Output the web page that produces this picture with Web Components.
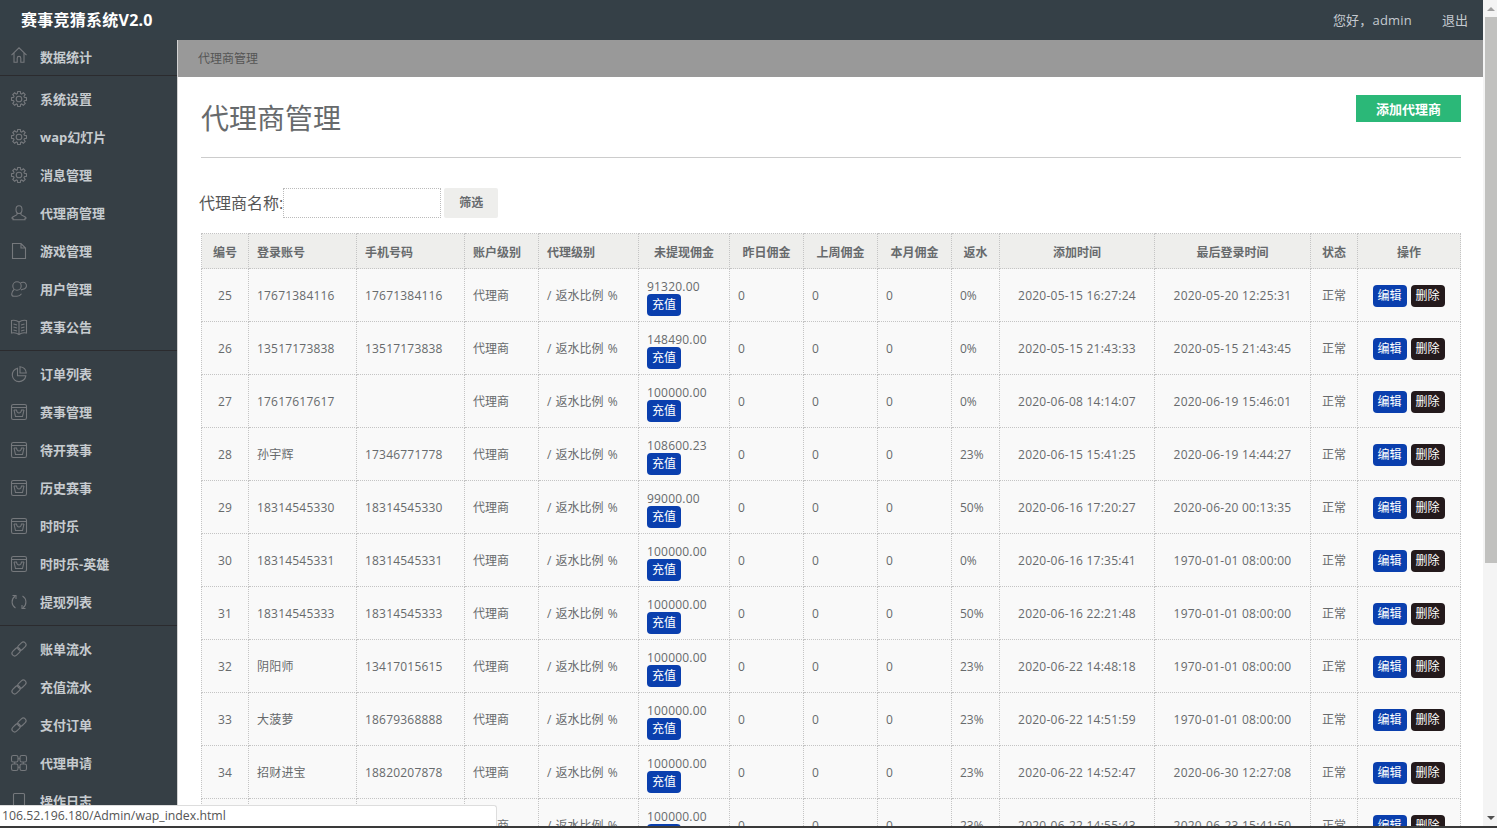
<!DOCTYPE html>
<html lang="zh">
<head>
<meta charset="utf-8">
<title>代理商管理</title>
<style>
  html, body { margin: 0; height: 828px; overflow: hidden; background: #fff; }
  body { font-family: "Open Sans", "Noto Sans CJK SC", sans-serif; font-size: 12px; color: #676a6c; }
</style>
</head>
<body>
<admin-shell>
  <top-bar slot="top" brand="赛事竞猜系统V2.0" user="您好，admin"></top-bar>
  <side-nav slot="side">
    <nav-group first>
      <nav-item icon="home">数据统计</nav-item>
    </nav-group>
    <nav-group>
      <nav-item icon="gear">系统设置</nav-item>
      <nav-item icon="gear">wap幻灯片</nav-item>
      <nav-item icon="gear">消息管理</nav-item>
      <nav-item icon="user">代理商管理</nav-item>
      <nav-item icon="file">游戏管理</nav-item>
      <nav-item icon="users">用户管理</nav-item>
      <nav-item icon="book">赛事公告</nav-item>
    </nav-group>
    <nav-group>
      <nav-item icon="pie">订单列表</nav-item>
      <nav-item icon="tray">赛事管理</nav-item>
      <nav-item icon="tray">待开赛事</nav-item>
      <nav-item icon="tray">历史赛事</nav-item>
      <nav-item icon="tray">时时乐</nav-item>
      <nav-item icon="tray">时时乐-英雄</nav-item>
      <nav-item icon="refresh">提现列表</nav-item>
    </nav-group>
    <nav-group last>
      <nav-item icon="link">账单流水</nav-item>
      <nav-item icon="link">充值流水</nav-item>
      <nav-item icon="link">支付订单</nav-item>
      <nav-item icon="grid">代理申请</nav-item>
      <nav-item icon="square">操作日志</nav-item>
    </nav-group>
  </side-nav>
  <page-crumb>代理商管理</page-crumb>
  <page-head action="添加代理商">代理商管理</page-head>
  <filter-bar label="代理商名称:" action="筛选"></filter-bar>
  <agent-table></agent-table>
</admin-shell>
<status-tip>106.52.196.180/Admin/wap_index.html</status-tip>

<script>
function gearPath() {
  var pts = [];
  for (var i = 0; i < 8; i++) {
    var a = i * Math.PI / 4 - Math.PI / 2;
    [[-0.3, 5.6], [-0.17, 7.6], [0.17, 7.6], [0.3, 5.6]].forEach(function (p) {
      pts.push((8 + p[1] * Math.cos(a + p[0])).toFixed(2) + " " + (8 + p[1] * Math.sin(a + p[0])).toFixed(2));
    });
  }
  return "M" + pts.join("L") + "Z";
}

const ICONS = {
  home: '<path transform="translate(0 -2)" d="M.5 8.2 8 .8l7.5 7.4M3 6v9.2h3.2v-4a1.8 1.8 0 0 1 3.6 0v4H13V6"/>',
  gear: '<path d="' + gearPath() + '"/><circle cx="8" cy="8" r="2.8"/>',
  user: '<path d="M5 4.5C5 2 6.3.7 8 .7s3 1.3 3 3.8c0 2.2-1.3 4-3 4S5 6.7 5 4.5zM6 8v1.5c0 1-4.5 1.5-5 3.2v.5h1v1.6h12v-1.6h1v-.5c-.5-1.7-5-2.2-5-3.2V8"/>',
  file: '<path d="M1.5.5H10L14.5 5v10.500h-13zM10 .5V5h4.500"/>',
  users: '<circle cx="6" cy="5" r="4.200"/><path d="M9.500 2.200A3.500 3.500 0 1 1 12 8.200c-.8 0-1.500.4-2 1M3 8.500C1.500 10 .7 11.500.7 13c0 1.400.9 2.300 2.200 2.300H6c2 0 3.500-1 4.500-2.500"/>',
  book: '<path d="M.5 1.500c2.700-.5 5.500 0 7.500 1.500 2-1.500 4.800-2 7.500-1.500V14c-2.700-.5-5.500 0-7.500 1.500C6 14 3.200 13.500.5 14zM8 3v12.500M2.500 5 6 6M2.500 8 6 9M2.500 11 6 12M13.500 5 10 6M13.500 8 10 9M13.500 11 10 12"/>',
  pie: '<path d="M6.500 2.200A6.800 6.800 0 1 0 14.800 9.800H6.500zM9 .7c3.400.3 6 2.900 6.300 6.300H9z"/>',
  tray: '<rect x=".5" y=".5" width="15" height="15" rx="1.800"/><path d="M.5 3.500h15M3 6h2.500c.5 4 4.500 4 5 0H13M3 6l1.500 6.500h7L13 6"/>',
  refresh: '<path d="M4.500 14A7 7 0 0 1 4 2.300M11.500 2A7 7 0 0 1 12 13.700M1.500 1.500H5V5M14.500 14.500H11V11"/>',
  link: '<g transform="rotate(-45 8 8)"><rect x="-.8" y="5.300" width="9.500" height="5.400" rx="2.700"/><rect x="7.300" y="5.300" width="9.500" height="5.400" rx="2.700"/></g>',
  grid: '<rect x=".5" y=".5" width="6.500" height="6.500" rx="1.800"/><rect x="9" y=".5" width="6.500" height="6.500" rx="1.800"/><rect x=".5" y="9" width="6.500" height="6.500" rx="1.800"/><rect x="9" y="9" width="6.500" height="6.500" rx="1.800"/><path d="M7 3.700h2M7 12.300h2M3.700 7v2M12.300 7v2"/>',
  square: '<rect x="2.500" y=".5" width="11" height="15" rx="1"/>'
};

class AdminShell extends HTMLElement {
  constructor() {
    super();
    this.shadowDOM = this.attachShadow({mode: "open"});
  }
  connectedCallback() {
    this.shadowDOM.innerHTML = `
      <style>
        :host { display: flex; flex-direction: column; height: 828px; overflow: hidden; }
        .screen { flex: 1; min-height: 0; display: flex; }
        .page { flex: 1; min-width: 0; display: flex; flex-direction: column; }
        .below { flex: 1; min-height: 0; display: flex; }
        .main { flex: 1; min-width: 0; border-left: 1px solid #d2d2d2; overflow: hidden; }
        .scroll { width: 14px; flex: none; display: flex; flex-direction: column; align-items: flex-end; background: #f4f4f4; }
        .arrow { width: 12px; height: 17px; display: flex; align-items: center; justify-content: center; }
        .up { width: 0; height: 0; border: 4px solid transparent; border-top: 0; border-bottom: 4px solid #a0a0a0; }
        .down { width: 0; height: 0; border: 4px solid transparent; border-bottom: 0; border-top: 4px solid #505050; }
        .thumb { width: 12px; height: 546px; background: #c1c1bf; }
        .gap { flex: 1; }
        .edge { height: 2px; background: #3a3a3a; flex: none; }
      </style>
      <div class="screen">
        <div class="page">
          <slot name="top"></slot>
          <div class="below">
            <slot name="side"></slot>
            <div class="main"><slot></slot></div>
          </div>
        </div>
        <div class="scroll">
          <div class="arrow"><span class="up"></span></div>
          <div class="thumb"></div>
          <div class="gap"></div>
          <div class="arrow"><span class="down"></span></div>
        </div>
      </div>
      <div class="edge"></div>`;
  }
}
customElements.define("admin-shell", AdminShell);

class TopBar extends HTMLElement {
  constructor() {
    super();
    this.shadowDOM = this.attachShadow({mode: "open"});
  }
  connectedCallback() {
    this.shadowDOM.innerHTML = `
      <style>
        :host { display: flex; align-items: center; justify-content: space-between; height: 40px; flex: none;
                background: #354047; padding: 0 15px 0 21px; }
        .brand { font-size: 16px; font-weight: 700; color: #fff; line-height: 40px; letter-spacing: .25px; }
        .links { display: flex; gap: 30px; font-size: 13px; color: #c4cad0; line-height: 40px; }
        .who { letter-spacing: .2px; }
      </style>
      <div class="brand">${this.getAttribute("brand")}</div>
      <div class="links"><span class="who">${this.getAttribute("user")}</span><span>退出</span></div>`;
  }
}
customElements.define("top-bar", TopBar);

class SideNav extends HTMLElement {
  constructor() {
    super();
    this.shadowDOM = this.attachShadow({mode: "open"});
  }
  connectedCallback() {
    this.shadowDOM.innerHTML = `
      <style>
        :host { display: block; width: 177px; flex: none; background: #363f45; overflow: hidden; }
      </style>
      <slot></slot>`;
  }
}
customElements.define("side-nav", SideNav);

class NavGroup extends HTMLElement {
  constructor() {
    super();
    this.shadowDOM = this.attachShadow({mode: "open"});
  }
  connectedCallback() {
    this.shadowDOM.innerHTML = `
      <style>
        :host { display: block; padding: 4px 0; border-bottom: 1px solid #2b2b2e; }
        :host([first]) { padding: 0; }
        :host([first]) ::slotted(nav-item) { height: 35px; }
        :host([last]) { border-bottom: 0; }
      </style>
      <slot></slot>`;
  }
}
customElements.define("nav-group", NavGroup);

class NavItem extends HTMLElement {
  constructor() {
    super();
    this.shadowDOM = this.attachShadow({mode: "open"});
  }
  connectedCallback() {
    this.shadowDOM.innerHTML = `
      <style>
        :host { display: flex; align-items: center; gap: 13px; height: 38px; box-sizing: border-box;
                padding: 0 0 2px 11px; font-size: 13px; font-weight: 700; color: #c6cbcf; white-space: nowrap; }
        svg { width: 16px; height: 16px; flex: none; margin-top: 1px; fill: none; stroke: #75787c; stroke-width: 1.1; overflow: visible; }
      </style>
      <svg viewBox="0 0 16 16">${ICONS[this.getAttribute("icon")]}</svg>
      <span><slot></slot></span>`;
  }
}
customElements.define("nav-item", NavItem);

class PageCrumb extends HTMLElement {
  constructor() {
    super();
    this.shadowDOM = this.attachShadow({mode: "open"});
  }
  connectedCallback() {
    this.shadowDOM.innerHTML = `
      <style>
        :host { display: block; height: 37px; line-height: 37px; background: #999; color: #555; font-size: 12px; padding-left: 20px; }
      </style>
      <slot></slot>`;
  }
}
customElements.define("page-crumb", PageCrumb);

class PageHead extends HTMLElement {
  constructor() {
    super();
    this.shadowDOM = this.attachShadow({mode: "open"});
  }
  connectedCallback() {
    this.shadowDOM.innerHTML = `
      <style>
        :host { display: flex; justify-content: space-between; align-items: flex-start; height: 81px; box-sizing: border-box;
                margin: 0 22px 0 23px; border-bottom: 1px solid #ccc; }
        h1 { margin: 0; padding-top: 21px; font-size: 28px; line-height: 40px; font-weight: 400; color: #676a6c; }
        a { display: block; margin-top: 18px; width: 105px; height: 27px; line-height: 28px; text-align: center;
            background: #2bb878; color: #fff; font-size: 13px; font-weight: 700; }
      </style>
      <h1><slot></slot></h1>
      <a>${this.getAttribute("action")}</a>`;
  }
}
customElements.define("page-head", PageHead);

class FilterBar extends HTMLElement {
  constructor() {
    super();
    this.shadowDOM = this.attachShadow({mode: "open"});
  }
  connectedCallback() {
    this.shadowDOM.innerHTML = `
      <style>
        :host { display: flex; align-items: center; height: 30px; margin: 30px 0 15px 21px; }
        label { font-size: 16px; color: #555; line-height: 30px; }
        input { box-sizing: border-box; width: 158px; height: 30px; margin: 0 3px 0 0; padding: 0 4px; background: #fff;
                border: 1px dotted #bbb; outline: 0; }
        button { width: 54px; height: 30px; padding: 0 0 2px; border: 0; border-radius: 2px; background: #eeeeec;
                 font: 700 12px "Open Sans", "Noto Sans CJK SC", sans-serif; color: #676a6c; }
      </style>
      <label>${this.getAttribute("label")}</label>
      <input type="text">
      <button>${this.getAttribute("action")}</button>`;
  }
}
customElements.define("filter-bar", FilterBar);

const AGENT_ROWS = [
  [25, "17671384116", "17671384116", "91320.00", "0%", "2020-05-15 16:27:24", "2020-05-20 12:25:31"],
  [26, "13517173838", "13517173838", "148490.00", "0%", "2020-05-15 21:43:33", "2020-05-15 21:43:45"],
  [27, "17617617617", "", "100000.00", "0%", "2020-06-08 14:14:07", "2020-06-19 15:46:01"],
  [28, "孙宇辉", "17346771778", "108600.23", "23%", "2020-06-15 15:41:25", "2020-06-19 14:44:27"],
  [29, "18314545330", "18314545330", "99000.00", "50%", "2020-06-16 17:20:27", "2020-06-20 00:13:35"],
  [30, "18314545331", "18314545331", "100000.00", "0%", "2020-06-16 17:35:41", "1970-01-01 08:00:00"],
  [31, "18314545333", "18314545333", "100000.00", "50%", "2020-06-16 22:21:48", "1970-01-01 08:00:00"],
  [32, "阴阳师", "13417015615", "100000.00", "23%", "2020-06-22 14:48:18", "1970-01-01 08:00:00"],
  [33, "大菠萝", "18679368888", "100000.00", "23%", "2020-06-22 14:51:59", "1970-01-01 08:00:00"],
  [34, "招财进宝", "18820207878", "100000.00", "23%", "2020-06-22 14:52:47", "2020-06-30 12:27:08"],
  [35, "财神", "18820207879", "100000.00", "23%", "2020-06-22 14:55:43", "2020-06-23 15:41:50"]
];

class AgentTable extends HTMLElement {
  constructor() {
    super();
    this.shadowDOM = this.attachShadow({mode: "open"});
  }
  connectedCallback() {
    this.render();
  }
  render() {
    const widths = [47, 108, 108, 74, 100, 91, 74, 74, 74, 48, 155, 156, 47, 103];
    const heads = [["编号", "c"], ["登录账号", ""], ["手机号码", ""], ["账户级别", ""], ["代理级别", ""], ["未提现佣金", "c"],
      ["昨日佣金", "c"], ["上周佣金", "c"], ["本月佣金", "c"], ["返水", "c"], ["添加时间", "c"], ["最后登录时间", "c"], ["状态", "c"], ["操作", "c"]];
    const rows = AGENT_ROWS.map(r => `
      <tr>
        <td class="c n">${r[0]}</td>
        <td class="n">${r[1]}</td>
        <td class="n">${r[2]}</td>
        <td>代理商</td>
        <td class="rate">/ 返水比例 %</td>
        <td class="money"><div class="n">${r[3]}</div><a class="btn blue">充值</a></td>
        <td>0</td>
        <td>0</td>
        <td>0</td>
        <td>${r[4]}</td>
        <td class="c t">${r[5]}</td>
        <td class="c t">${r[6]}</td>
        <td class="c">正常</td>
        <td class="ops"><div><a class="btn blue">编辑</a><a class="btn dark">删除</a></div></td>
      </tr>`).join("");
    this.shadowDOM.innerHTML = `
      <style>
        :host { display: block; margin: 0 22px 0 23px; }
        table { border-collapse: collapse; table-layout: fixed; width: 1259px; background: #f9f9f9; }
        th, td { border: 1px dotted #c4c4c4; padding: 8px 8px 6px; font-size: 12px; line-height: 16px; color: #676a6c;
                 text-align: left; vertical-align: middle; white-space: nowrap; }
        th { background: #eeeeec; font-weight: 700; height: 20px; padding: 9px 8px 5px; }
        tr td { height: 38px; }
        .c { text-align: center; }
        .n { letter-spacing: .2px; }
        .t { letter-spacing: .25px; }
        .rate { word-spacing: 1px; }
        td.money { padding: 9px 8px 5px; }
        .money div { line-height: 18px; margin-bottom: -2px; }
        .btn { display: block; width: 34px; height: 22px; line-height: 21px; text-align: center; border-radius: 4px;
               color: #fff; font-size: 12px; letter-spacing: 0; }
        .blue { background: #0a3fae; }
        .dark { background: #241a1c; }
        .ops div { display: flex; justify-content: center; gap: 4px; padding-right: 1px; }
      </style>
      <table>
        <colgroup>${widths.map(w => `<col style="width:${w}px">`).join("")}</colgroup>
        <thead><tr>${heads.map(h => `<th class="${h[1]}">${h[0]}</th>`).join("")}</tr></thead>
        <tbody>${rows}</tbody>
      </table>`;
  }
}
customElements.define("agent-table", AgentTable);

class StatusTip extends HTMLElement {
  constructor() {
    super();
    this.shadowDOM = this.attachShadow({mode: "open"});
  }
  connectedCallback() {
    this.shadowDOM.innerHTML = `
      <style>
        :host { position: fixed; left: 0; bottom: 2px; width: 497px; height: 21px; box-sizing: border-box;
                background: #fff; border-radius: 0 3px 0 0; border: 1px solid #ddd; border-width: 1px 1px 0 0;
                padding-left: 2px; font-size: 12.3px; line-height: 20px; color: #555; }
      </style>
      <slot></slot>`;
  }
}
customElements.define("status-tip", StatusTip);
</script>
</body>
</html>
